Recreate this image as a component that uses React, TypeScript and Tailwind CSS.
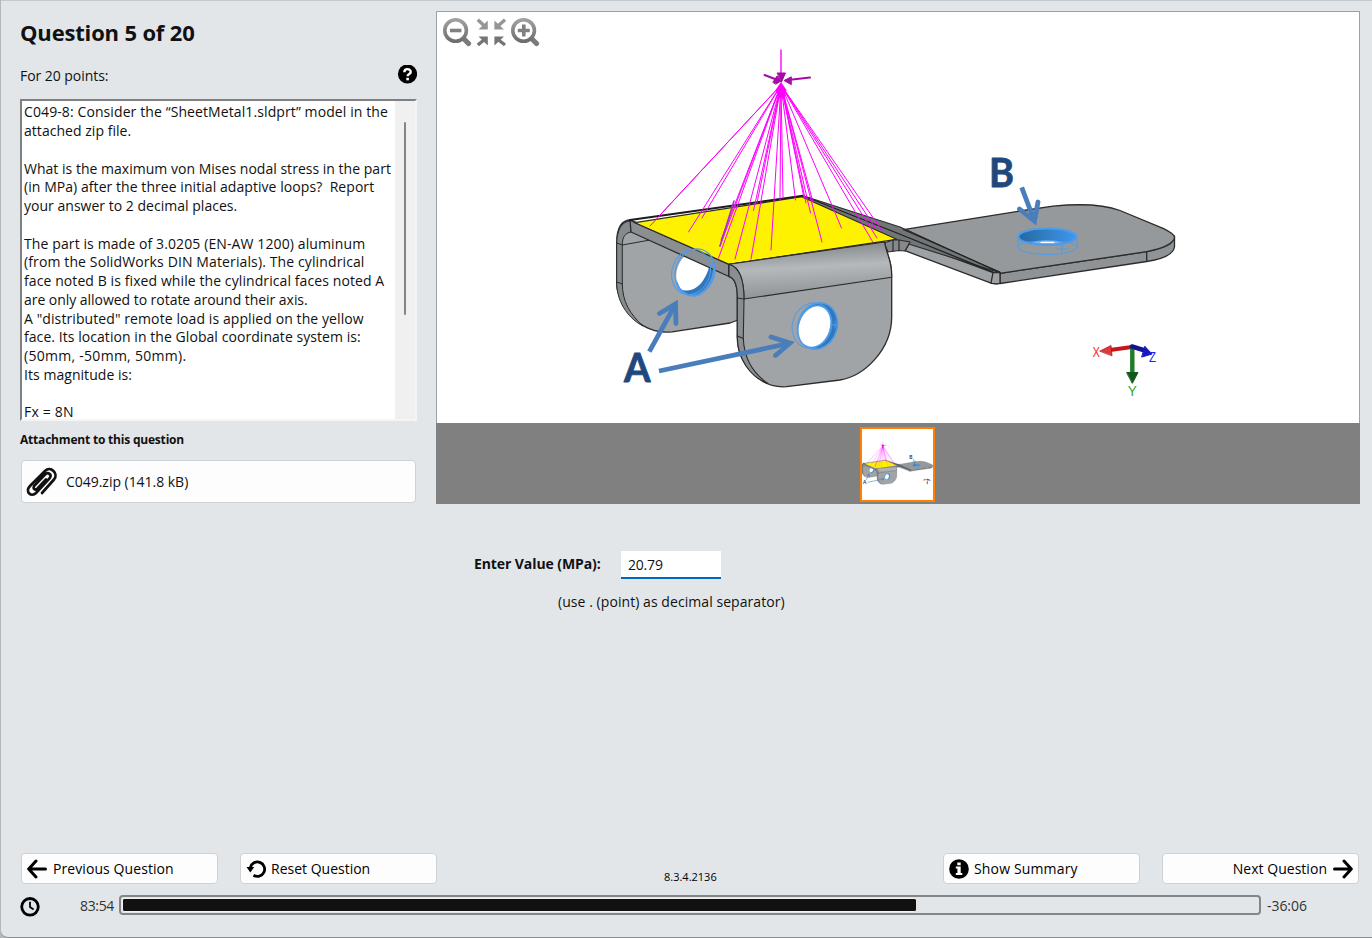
import React from "react";

const rays: [number, number][] = [
  [650, 226], [660, 215], [688.5, 232], [702, 218], [720, 246], [721, 240], [718.5, 258], [735, 259], [751, 259],
  [753.5, 210.5], [757, 203], [771, 250], [780, 200], [783, 198], [795.5, 200], [806, 203], [810.5, 213],
  [804, 198], [822, 242], [813, 202], [841.5, 228], [872.5, 241.5], [877, 238], [883, 232], [876, 229],
];

function Scene() {
  return (
    <g strokeLinejoin="round" strokeLinecap="round">
      {/* right plate */}
      <g stroke="#2b2b2b" strokeWidth="1.3">
        <path d="M1000 273.3L1146.7 251.7C1160 249 1173 243 1174.5 236V247C1173 255 1160 259.5 1146.7 261.5L1000 283.5Z" fill="#8f9395" />
        <path d="M905 229.3L1020 211L1053 206.2C1080 203.5 1105 205 1120 210.5L1163 228.3C1171 232 1175 235 1174.5 238C1173 245 1160 249 1146.7 251.7L1000 273.3Z" fill="#95999b" />
        <path d="M1146.7 251.7V261" fill="none" />
        <path d="M910 241.7L898 230L1000 272.7V283.3L996.7 284L991.7 283.3L905 250.7Z" fill="#9da1a3" />
        <path d="M910 241.7L993 272.7L991 283M993 272.7H1000M905 250.7L910 241.7" fill="none" />
      </g>

      {/* rear flange */}
      <path d="M616.7 243C616.7 230 620 220 631 220L729 266L738 290V320L730 323L672 331.8C650 334 634 322 627 309C619 297 616.7 292 616.7 283Z" fill="#a0a4a6" stroke="#2b2b2b" strokeWidth="1.3" />
      <path d="M616.7 243V283C617 305 631 320 643 326C630 314 622.3 302 622.3 283V245C622.3 237 625 233 631 232L631 221C621 221 617 231 616.7 243Z" fill="#868a8c" stroke="#2b2b2b" strokeWidth="1" />
      <path d="M616.7 243L622.3 245L650 240M616.7 282L622.3 284" fill="none" stroke="#2b2b2b" strokeWidth="1" />
      <ellipse cx="693.8" cy="272.5" rx="17" ry="22" transform="rotate(19 693.8 272.5)" fill="white" />
      <path d="M711 257C717 270 711 288 696 295C687 297 683 293 680 289C696 296 709 278 711 257Z" fill="#3077bd" />

      {/* top face */}
      <path d="M630 220L635 222.7L729 264.3V276.5L631 232Z" fill="#8b8f91" stroke="#2b2b2b" strokeWidth="1.3" />
      <path d="M803 195.7L900 227L1000 272.7L896 240L801 197Z" fill="#717577" stroke="#2b2b2b" strokeWidth="1.1" />
      <path d="M806 197L897 233L993 272" fill="none" stroke="#202020" strokeWidth="1.3" />
      <path d="M903 229.5L1000 272" fill="none" stroke="#202020" strokeWidth="1" />
      <path d="M635 222.7L801.7 196.7L896.7 239.3L729 264.3Z" fill="#fff200" stroke="#2b2b2b" strokeWidth="1.2" />
      <path d="M630 220L803 195.7" stroke="#1c1c1c" strokeWidth="2" />

      {/* front flange */}
      <path d="M884 243L893 240H899L910 242L905 251L899 250.5L888 252Z" fill="#85898b" stroke="#2b2b2b" strokeWidth="1.2" />
      <path d="M893 240V251M899 240V250.5" stroke="#2b2b2b" strokeWidth="1.2" />
      <path d="M729 264.3L884.5 242C886 254 891.7 258 891.7 275V316.7C891.7 350 864 376 840 380L786.7 386.7C758 389 737.3 362 737.3 337V297C737.3 286 735 278 729 276.5Z" fill="#a0a4a6" stroke="#2b2b2b" strokeWidth="1.3" />
      <path d="M729 264.3L884.5 242C886 254 891.7 258 891.7 277.3L744 299C744 278 739 267 729 264.3Z" fill="url(#bend)" stroke="#2b2b2b" strokeWidth="1.1" />
      <path d="M729 264.3C739 267 744 278 744 299L743.3 338C744 360 754 374 768 383.5C750 377 737.3 358 737.3 337V297C737.3 286 735 278 729 276.5Z" fill="#8a8e90" stroke="#2b2b2b" strokeWidth="1.1" />
      <path d="M737.3 298L744 299M737.3 336L743.3 338.5" stroke="#2b2b2b" strokeWidth="1.1" />

      {/* selected holes */}
      <g fill="none" stroke="#4f9bea" strokeWidth="1.6">
        <ellipse cx="691" cy="272" rx="19" ry="23" transform="rotate(19 691 272)" strokeWidth="1" />
        <ellipse cx="695" cy="272" rx="19.5" ry="23.5" transform="rotate(19 695 272)" strokeWidth="1.2" />
        <path d="M713 262C717 275 708 292 696 295.5C687 297 679 291 677 283" strokeWidth="2" />
        <ellipse cx="817.5" cy="326" rx="19.5" ry="23.5" transform="rotate(19 817.5 326)" fill="#3077bd" />
        <ellipse cx="814.5" cy="326.5" rx="16" ry="21.5" transform="rotate(19 814.5 326.5)" fill="white" />
        <ellipse cx="812" cy="325.5" rx="19.5" ry="23" transform="rotate(19 812 325.5)" strokeWidth="1" />
        <path d="M831 325H838M835 321V328" strokeWidth="1" />
        <ellipse cx="1047.3" cy="236.7" rx="29" ry="8.2" fill="url(#bore)" strokeWidth="2.2" />
        <path d="M1031 242.5C1040 239.5 1054 239.5 1063 242.5C1054 244.5 1040 244.5 1031 242.5Z" fill="#72b2ee" stroke="none" />
        <path d="M1041 242.3H1054" stroke="white" strokeWidth="1.2" />
        <path d="M1018 237V247C1020 257 1075 257 1077 247V237M1018 247C1022 241 1030 242 1035 242M1077 247C1072 241 1064 242 1059 242" strokeWidth="1" />
        <path d="M1057 249H1067M1062 245V254" strokeWidth="1" />
      </g>

      {/* remote load */}
      <g stroke="#ff00ff" strokeWidth="1">
        {rays.map(([x, y], i) => (
          <path key={i} d={`M781 85L${x} ${y}`} />
        ))}
        <path d="M781 50V78" strokeWidth="1.4" />
      </g>
      <path d="M720 246L734 201" stroke="#9b35d8" strokeWidth="1.6" />
      <path d="M775.5 90L781 82L786.5 90L784 99L781 97L779 99Z" fill="#ff00ff" />
      <g stroke="#a40ca4" strokeWidth="2" fill="#a40ca4">
        <path d="M764.5 75L775 79M810 77.5L788 80" />
        <path d="M773 82L777 76L781 81L776 84ZM791 77L784 80.5L791 84.5ZM777.5 73H785.5L781.5 82Z" strokeWidth="1" />
      </g>

      {/* callouts */}
      <g stroke="#4a7ebb" strokeWidth="4.8" fill="none" strokeLinecap="butt" strokeLinejoin="miter">
        <path d="M649.3 351.7L675 305M659 371L789 343.4M1021.7 187.3L1034 220" />
        <path d="M659.5 313.5L675.5 304L676 323.5M771 337L790 343L775.5 355.5M1019.5 209L1034.5 221L1038 202" strokeLinecap="round" />
      </g>
      <g fill="#1f497d" stroke="#1f497d" strokeWidth="0.8" fontFamily="Lato, sans-serif" fontWeight="700" fontSize="39.5">
        <text x="624" y="382.2" textLength="26.5" lengthAdjust="spacingAndGlyphs">A</text>
        <text x="989" y="187.4" textLength="25" lengthAdjust="spacingAndGlyphs">B</text>
      </g>

      {/* axis triad */}
      <path d="M1132 347L1110 350" stroke="#c4161c" strokeWidth="4" />
      <path d="M1100 351L1111 345.5L1112 355.5Z" fill="#e0383c" stroke="#9c1216" strokeWidth="0.7" />
      <path d="M1132.3 348V372" stroke="#1f7d26" strokeWidth="4.4" />
      <path d="M1127 372.5H1138L1132.5 383Z" fill="#12581a" stroke="#12581a" />
      <path d="M1132 346.5L1145 350.5" stroke="#14148f" strokeWidth="4.5" />
      <path d="M1145 346.5L1152 354L1142 357Z" fill="#1717c0" stroke="#1717c0" />
      <g fontFamily="Liberation Sans, sans-serif" fontSize="15.5">
        <text x="1092.5" y="357.3" fill="#ff2a2a" textLength="7.5" lengthAdjust="spacingAndGlyphs">X</text>
        <text x="1127.7" y="395.5" fill="#2aa52a" textLength="9" lengthAdjust="spacingAndGlyphs">Y</text>
        <text x="1149" y="362" fill="#2020ff" textLength="7" lengthAdjust="spacingAndGlyphs">Z</text>
      </g>
    </g>
  );
}

function Loupe({ plus }: { plus?: boolean }) {
  return (
    <svg className="h-8 w-[34px]" viewBox="0 0 34 32">
      <path d="M21.5 23.5L26.5 28.5" stroke="#7b7b7b" strokeWidth="5.2" strokeLinecap="round" />
      <circle cx="13.6" cy="15.5" r="10.8" fill="white" stroke="url(#metal)" strokeWidth="3.6" />
      <path d={plus ? "M7.8 15.5H19.8M13.8 9.5V21.5" : "M8 15.5H19.4"} stroke="#808080" strokeWidth="3.6" />
    </svg>
  );
}

function FitIcon() {
  return (
    <svg className="h-8 w-[34px]" viewBox="0 0 34 32">
      <path d="M1.8 4.8L8.5 11M29 4.8L22 11" stroke="#959595" strokeWidth="3.4" />
      <path d="M1.8 30L8.5 24.5M29 30L22 24.5" stroke="#757575" strokeWidth="3.4" />
      <path d="M11.8 5.5V14.5H2.5ZM18.4 5.5V14.5H28Z" fill="#959595" />
      <path d="M2.5 21.5H11.8V30.5ZM28 21.5H18.4V30.5Z" fill="#757575" />
    </svg>
  );
}

const lines: [string, string][] = [
  ["C049-8: Consider the “SheetMetal1.sldprt” model in the", "tracking-[0.1px]"],
  ["attached zip file.", "tracking-[0.04px]"],
  ["", ""],
  ["What is the maximum von Mises nodal stress in the part", "tracking-[0.02px]"],
  ["(in MPa) after the three initial adaptive loops?  Report", "tracking-[0.06px]"],
  ["your answer to 2 decimal places.", "tracking-[0.02px]"],
  ["", ""],
  ["The part is made of 3.0205 (EN-AW 1200) aluminum", "tracking-[0.11px]"],
  ["(from the SolidWorks DIN Materials). The cylindrical", "tracking-[0.12px]"],
  ["face noted B is fixed while the cylindrical faces noted A", "tracking-[0.09px]"],
  ["are only allowed to rotate around their axis.", "tracking-[-0.04px]"],
  ["A \"distributed\" remote load is applied on the yellow", "tracking-[0.09px]"],
  ["face. Its location in the Global coordinate system is:", "tracking-[0.06px]"],
  ["(50mm, -50mm, 50mm).", "tracking-[0.28px]"],
  ["Its magnitude is:", "tracking-[0.05px]"],
  ["", ""],
  ["Fx = 8N", "tracking-[0.2px]"],
];

const button =
  "flex h-[31px] w-[197px] items-center rounded-[4px] border border-[#cfd2d4] bg-[#fdfdfd] px-[5px] whitespace-nowrap";

function Arrow({ right }: { right?: boolean }) {
  return (
    <svg className={right ? "size-5 shrink-0 -scale-x-100" : "size-5 shrink-0"} viewBox="0 0 20 20" fill="none" stroke="black" strokeWidth="3" strokeLinecap="round" strokeLinejoin="round">
      <path d="M9 2L1.7 10L9 18M2 10H18.5" />
    </svg>
  );
}

export default function App() {
  return (
    <div className="h-[938px] w-[1372px] overflow-hidden bg-[#b4b6b8] font-['Open_Sans','Noto_Sans',sans-serif] text-[14px] leading-[19px] text-[#111]">
      <div className="ml-px flex h-[938px] w-[1371px] flex-col rounded-bl-[7px] border-t border-b border-t-[#c6c9cc] border-b-[#8c8e90] bg-[#e2e6e9]">
        <svg className="absolute size-0">
          <defs>
            <linearGradient id="bend" x1="0" y1="0" x2="0.15" y2="1">
              <stop offset="0.2" stopColor="#8e9294" />
              <stop offset="0.5" stopColor="#b5b9bb" />
              <stop offset="1" stopColor="#8f9395" />
            </linearGradient>
            <linearGradient id="bore" x1="0" y1="0" x2="1" y2="0">
              <stop offset="0" stopColor="#25689f" />
              <stop offset="1" stopColor="#3f97ec" />
            </linearGradient>
            <linearGradient id="metal" x1="0" y1="0" x2="0" y2="1">
              <stop offset="0" stopColor="#a0a0a0" />
              <stop offset="1" stopColor="#6e6e6e" />
            </linearGradient>
          </defs>
        </svg>

        <div className="flex h-[843px] pt-[10px]">
          <section className="ml-[19px] flex w-[397px] flex-col">
            <h1 className="mt-[6px] h-[30px] text-[22px] leading-[30px] font-bold tracking-[-0.17px] whitespace-nowrap">Question 5 of 20</h1>
            <div className="mt-[17px] flex h-[22px] items-center justify-between">
              <span className="tracking-[-0.05px]">For 20 points:</span>
              <svg className="size-5" viewBox="0 0 20 20">
                <circle cx="10.5" cy="9" r="9.6" fill="black" />
                <path d="M7.3 7.2C7.3 3.2 13.7 3.2 13.7 7C13.7 9.2 10.6 9 10.6 11.3" fill="none" stroke="white" strokeWidth="2.4" />
                <rect x="9.3" y="12.8" width="2.6" height="2.5" fill="white" />
              </svg>
            </div>
            <div className="mt-[13px] flex h-[322px] w-[397px] border-t-2 border-r-2 border-b-2 border-l-2 border-t-[#808080] border-r-[#f4f5f6] border-b-[#f4f5f6] border-l-[#808080] bg-white">
              <div className="w-[373px] pt-[2.4px] pl-[2px] leading-[18.75px] whitespace-pre">
                {lines.map(([t, c], i) => (
                  <div key={i} className="h-[18.75px]">
                    <span className={c}>{t}</span>
                  </div>
                ))}
              </div>
              <div className="flex flex-1 justify-center bg-[#f0f0f0] pt-[21px]">
                <div className="h-[193px] w-[2px] rounded bg-[#858585]" />
              </div>
            </div>
            <div className="mt-[9px] h-5 text-[12px] leading-5 font-bold tracking-[-0.2px] whitespace-nowrap">Attachment to this question</div>
            <button className="mt-[10px] ml-px flex h-[43px] w-[395px] items-center rounded-[4px] border border-[#cfd2d4] bg-[#fdfdfd] pl-1">
              <svg className="h-8 w-8" viewBox="0 0 32 32" fill="none" stroke="#111" strokeWidth="2.7" strokeLinecap="round">
                <path d="M16 27L28 13.5C33 7.5 24.5 -0.5 19 5L4 20C-1.5 26 5.5 31.5 10 27L23.5 12.5C26.5 8.5 22 5.5 19 8.5L8.5 19.5C6 23 9.5 24.5 11.5 22.5L20 13.5" />
              </svg>
              <span className="ml-2 tracking-[-0.03px]">C049.zip (141.8 kB)</span>
            </button>
          </section>

          <section className="ml-[19px] flex w-[924px] flex-col">
            <div className="relative h-[412px] border border-b-0 border-[#a0a0a0] bg-white">
              <svg className="h-[411px] w-[922px]" viewBox="437 12 922 411">
                <Scene />
              </svg>
              <div className="absolute top-[3px] left-[5px] flex">
                <Loupe />
                <FitIcon />
                <Loupe plus />
              </div>
            </div>
            <div className="flex h-[81px] justify-center bg-[#808080] pt-1 pr-[2px]">
              <div className="size-[75px] border-2 border-[#ff8000] bg-white outline-1 -outline-offset-2 outline-[#ff8000]">
                <svg className="size-full" viewBox="617 -50 560 560">
                  <Scene />
                </svg>
              </div>
            </div>
            <div className="mt-[47px] ml-[38px] flex h-7 items-center">
              <span className="mb-[3px] w-[147px] font-bold tracking-[-0.09px] whitespace-nowrap">Enter Value (MPa):</span>
              <div className="h-7 w-[100px] border-b-2 border-[#0067c0] bg-white pt-[4px] pl-[7px] tracking-[-0.2px]">20.79</div>
            </div>
            <div className="mt-[13px] ml-[122px] tracking-[0.06px]">(use . (point) as decimal separator)</div>
          </section>
        </div>

        <footer>
          <div className="flex h-[51px] items-start pt-[9px] pl-[20px] text-black">
            <button className={button}>
              <Arrow />
              <span className="ml-[6px] tracking-[0.08px]">Previous Question</span>
            </button>
            <button className={`${button} ml-[22px]`}>
              <svg className="size-5 shrink-0" viewBox="0 0 20 20" fill="none" stroke="black" strokeWidth="2.8">
                <path d="M4.4 8.5A7.2 7.2 0 1 1 7.5 16.2" />
                <path d="M0.5 8H8.2L4.3 13.6Z" fill="black" stroke="none" />
              </svg>
              <span className="ml-[5px]">Reset Question</span>
            </button>
            <span className="mt-[14px] ml-[227px] w-[53px] text-[11px]">8.3.4.2136</span>
            <button className={`${button} ml-[226px]`}>
              <svg className="size-5 shrink-0" viewBox="0 0 20 20">
                <circle cx="10" cy="10" r="9.8" fill="black" />
                <path d="M8.3 3.5H11.7V6.2H8.3ZM6.8 7.5H11.7V14H13.3V16H6.8V14H8.4V9.4H6.8Z" fill="white" />
              </svg>
              <span className="ml-[5px] tracking-[0.15px]">Show Summary</span>
            </button>
            <button className={`${button} ml-[22px] justify-end`}>
              <span className="mr-[6px] tracking-[0.03px]">Next Question</span>
              <Arrow right />
            </button>
          </div>
          <div className="flex h-5 items-center pl-[19px] text-[#333]">
            <svg className="mt-1 size-5" viewBox="0 0 20 20" fill="none" stroke="black">
              <circle cx="10" cy="9.8" r="8.3" strokeWidth="2.8" />
              <path d="M10 4.8V10L13.6 12.5" strokeWidth="1.8" />
            </svg>
            <span className="ml-10 w-[39px] tracking-[-0.35px]">83:54</span>
            <div className="flex h-5 w-[1142px] rounded-[4px] border-2 border-[#858585] p-px">
              <div className="h-[14px] w-[794px] rounded-[2px] border border-r-0 border-[#f2f2f2] bg-[#111]" />
            </div>
            <span className="ml-[6px] tracking-[-0.05px]">-36:06</span>
          </div>
        </footer>
      </div>
    </div>
  );
}
